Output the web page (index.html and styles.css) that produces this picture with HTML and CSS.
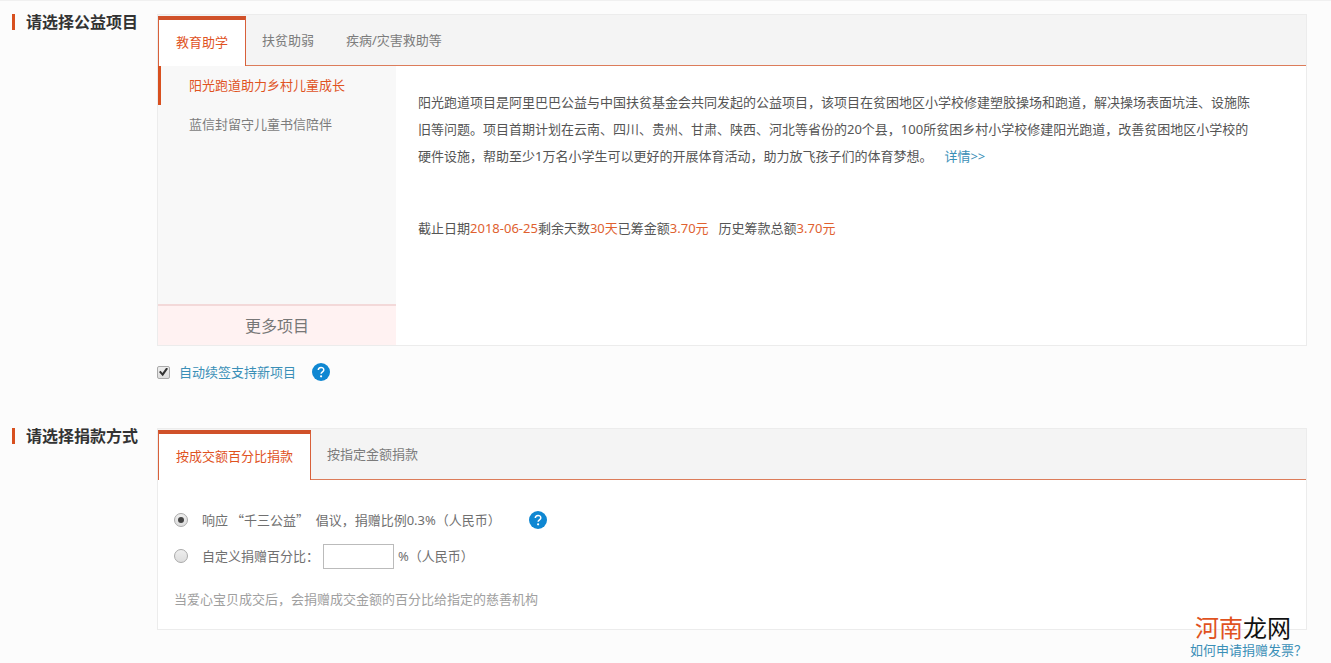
FILE: index.html
```html
<!DOCTYPE html>
<html lang="zh-CN">
<head>
<meta charset="utf-8">
<meta name="viewport" content="width=device-width, initial-scale=1">
<title>请选择公益项目</title>
<link rel="stylesheet" href="styles.css">
</head>
<body>
<main class="page">
  <section class="section">
    <h2 class="section-title">请选择公益项目</h2>
    <div class="section-main">
      <div class="panel">
        <div class="tabs">
          <button class="tab tab-active" type="button">教育助学</button>
          <button class="tab" type="button">扶贫助弱</button>
          <button class="tab" type="button">疾病/灾害救助等</button>
        </div>
        <div class="project">
          <div class="sidebar">
            <button class="side-item side-item-active" type="button">阳光跑道助力乡村儿童成长</button>
            <button class="side-item" type="button">蓝信封留守儿童书信陪伴</button>
            <button class="more" type="button">更多项目</button>
          </div>
          <div class="detail">
            <p class="intro">阳光跑道项目是阿里巴巴公益与中国扶贫基金会共同发起的公益项目，该项目在贫困地区小学校修建塑胶操场和跑道，解决操场表面坑洼、设施陈旧等问题。项目首期计划在云南、四川、贵州、甘肃、陕西、河北等省份的20个县，100所贫困乡村小学校修建阳光跑道，改善贫困地区小学校的硬件设施，帮助至少1万名小学生可以更好的开展体育活动，助力放飞孩子们的体育梦想。<a class="link more-link" href="#">详情&gt;&gt;</a></p>
            <p class="stats"><span>截止日期<em>2018-06-25</em>剩余天数<em>30天</em>已筹金额<em>3.70元</em></span><span>历史筹款总额<em>3.70元</em></span></p>
          </div>
        </div>
      </div>
      <div class="renew">
        <input class="check" type="checkbox" id="renew" checked>
        <label class="link" for="renew">自动续签支持新项目</label>
        <svg class="help" viewBox="0 0 18 18" role="img" aria-label="帮助"><circle cx="9" cy="9" r="9" fill="#0f87d2"/><path d="M6.3 7.1C6.3 3.5 11.8 3.6 11.8 6.9C11.8 8.8 9.1 8.8 9.1 10.8" fill="none" stroke="#fff" stroke-width="1.5"/><circle cx="9.1" cy="13.3" r="1.1" fill="#fff"/></svg>
      </div>
    </div>
  </section>

  <section class="section">
    <h2 class="section-title">请选择捐款方式</h2>
    <div class="section-main">
      <div class="panel">
        <div class="tabs">
          <button class="tab tab-active" type="button">按成交额百分比捐款</button>
          <button class="tab" type="button">按指定金额捐款</button>
        </div>
        <div class="method">
          <div class="option">
            <input class="radio" type="radio" name="ratio" id="fixed" checked>
            <label for="fixed"><span class="wide">响应 “千三公益”</span>&nbsp; 倡议，捐赠比例0.3%（人民币）</label>
            <svg class="help help-far" viewBox="0 0 18 18" role="img" aria-label="帮助"><circle cx="9" cy="9" r="9" fill="#0f87d2"/><path d="M6.3 7.1C6.3 3.5 11.8 3.6 11.8 6.9C11.8 8.8 9.1 8.8 9.1 10.8" fill="none" stroke="#fff" stroke-width="1.5"/><circle cx="9.1" cy="13.3" r="1.1" fill="#fff"/></svg>
          </div>
          <div class="option">
            <input class="radio" type="radio" name="ratio" id="custom">
            <label for="custom">自定义捐赠百分比：</label>
            <input class="percent" type="text" aria-label="自定义捐赠百分比">
            <span>%（人民币）</span>
          </div>
          <p class="note">当爱心宝贝成交后，会捐赠成交金额的百分比给指定的慈善机构</p>
        </div>
        <div class="watermark"><span>河南</span>龙网</div>
      </div>
      <div class="footer"><a class="link" href="#">如何申请捐赠发票？</a></div>
    </div>
  </section>
</main>
</body>
</html>
```

FILE: styles.css
```css
* {
  box-sizing: border-box;
}

body {
  margin: 0;
  background: #fcfcfc;
  color: #707070;
  font: 13px/20px "Noto Sans", "Noto Sans CJK SC", sans-serif;
}

h2, p {
  margin: 0;
}

button, input {
  margin: 0;
  font: inherit;
}

.page {
  border-top: 1px solid #f0f0f0;
  padding: 13px 24px 0 12px;
}

.section {
  display: grid;
  grid-template-columns: 145px 1fr;
}

.section-title {
  align-self: start;
  border-left: 3px solid #d8501f;
  padding-left: 11px;
  color: #333;
  font-size: 16px;
  line-height: 16px;
}

.panel {
  position: relative;
  border: 1px solid #ececec;
  background: #fff;
}

.tabs {
  display: flex;
  height: 51px;
  padding-top: 1px;
  border-bottom: 1px solid #dc7c5a;
  background: #f4f4f4;
}

.tab {
  border: 0;
  padding: 0 16px 2px;
  background: none;
  color: #7c7c7c;
}

.tab-active {
  margin-bottom: -1px;
  border: 1px solid #d8603a;
  border-top: 4px solid #d0512a;
  border-bottom: 0;
  padding: 0 17px 2px;
  background: #fff;
  color: #e0531f;
}

.project {
  display: flex;
  min-height: 279px;
}

.sidebar {
  display: flex;
  flex-direction: column;
  flex: 0 0 238px;
  background: #f8f8f8;
}

.side-item {
  height: 39px;
  border: 0;
  border-left: 3px solid transparent;
  padding: 0 28px 2px;
  background: none;
  color: #7c7c7c;
  text-align: left;
}

.side-item-active {
  border-left-color: #d8501f;
  color: #e0531f;
}

.more {
  height: 41px;
  margin-top: auto;
  border: 0;
  border-top: 2px solid #f3d9d9;
  background: #fff2f2;
  color: #777;
  font-size: 16px;
}

.detail {
  flex: 1;
  padding: 23px 52px 0 22px;
  color: #555;
}

.intro {
  line-height: 27px;
}

.link {
  color: #3a8fb7;
  text-decoration: none;
}

.more-link {
  margin-left: 12px;
}

.stats {
  display: flex;
  gap: 10px;
  margin-top: 48px;
}

.stats em {
  color: #e0612f;
  font-style: normal;
}

.renew {
  display: flex;
  align-items: center;
  height: 20px;
  margin: 16px 0 46px;
}

.check, .radio {
  display: grid;
  place-items: center;
  flex: none;
  appearance: none;
  border: 1px solid #aaa;
  background: linear-gradient(#eee, #ddd);
}

.check {
  width: 13px;
  height: 13px;
  margin-right: 9px;
  border-radius: 2px;
}

.check:checked::before {
  content: "";
  width: 9px;
  height: 9px;
  background: #333;
  clip-path: polygon(0 50%, 18% 36%, 38% 60%, 82% 0, 100% 14%, 42% 96%);
}

.radio {
  width: 14px;
  height: 14px;
  margin-right: 14px;
  border-radius: 50%;
}

.radio:checked::before {
  content: "";
  width: 6px;
  height: 6px;
  border-radius: 50%;
  background: #444;
}

.help {
  width: 18px;
  height: 18px;
  margin-left: 16px;
}

.help-far {
  margin-left: 28px;
}

.method {
  display: flex;
  flex-direction: column;
  gap: 10px;
  padding: 27px 16px 20px;
}

.option {
  display: flex;
  align-items: center;
  height: 26px;
}

.wide {
  font-family: "Noto Sans CJK SC", sans-serif;
}

.percent {
  width: 71px;
  height: 25px;
  margin: 0 4px;
  border: 1px solid #bbb;
  padding: 0 4px;
  background: #fff;
}

.note {
  margin-top: 10px;
  color: #a0a0a0;
}

.watermark {
  position: absolute;
  right: 15px;
  bottom: -13px;
  color: #111;
  font-size: 24px;
  line-height: 28px;
}

.watermark span {
  color: #e0531f;
}

.footer {
  padding-top: 10px;
  text-align: right;
}
```
